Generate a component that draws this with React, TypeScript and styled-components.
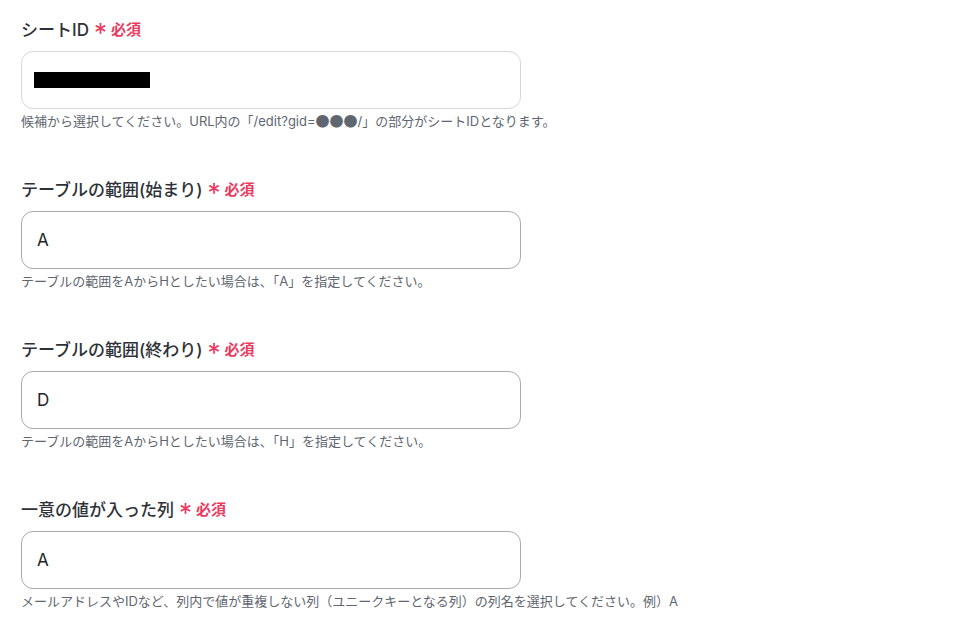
import styled, { createGlobalStyle } from 'styled-components'
import { ReactNode } from 'react'

const GlobalStyle = createGlobalStyle`
  html, body {
    margin: 0;
    padding: 0;
    background: #ffffff;
  }
  body {
    font-family: Inter, "Noto Sans CJK JP", sans-serif;
    color: #333840;
  }
`

interface FieldData {
  label: string
  value?: string
  masked?: boolean
  help: ReactNode
  light?: boolean
}

const Dots = styled.span`
  font-family: "Noto Sans CJK JP", sans-serif;
  font-size: 14px;
  line-height: 1;
`

const fields: FieldData[] = [
  {
    label: 'シートID',
    masked: true,
    light: true,
    help: (
      <>
        候補から選択してください。URL内の「/edit?gid=<Dots>●●●</Dots>/」の部分がシートIDとなります。
      </>
    ),
  },
  {
    label: 'テーブルの範囲(始まり)',
    value: 'A',
    help: 'テーブルの範囲をAからHとしたい場合は、「A」を指定してください。',
  },
  {
    label: 'テーブルの範囲(終わり)',
    value: 'D',
    help: 'テーブルの範囲をAからHとしたい場合は、「H」を指定してください。',
  },
  {
    label: '一意の値が入った列',
    value: 'A',
    help: 'メールアドレスやIDなど、列内で値が重複しない列（ユニークキーとなる列）の列名を選択してください。例）A',
  },
]

const Field = ({ label, value, masked, help, light }: FieldData) => (
  <FieldBlock>
    <Label>
      {label}
      <Required>
        <Asterisk>*</Asterisk>必須
      </Required>
    </Label>
    <InputBox $light={light}>{masked ? <Mask /> : value}</InputBox>
    <Help>{help}</Help>
  </FieldBlock>
)

export default function App() {
  return (
    <>
      <GlobalStyle />
      <Form>
        {fields.map((f) => (
          <Field key={f.label} {...f} />
        ))}
      </Form>
    </>
  )
}

const Form = styled.div`
  display: flex;
  flex-direction: column;
  gap: 46px;
  padding: 16px 0 0 21px;
  width: 900px;
`

const FieldBlock = styled.div`
  display: flex;
  flex-direction: column;
`

const Label = styled.div`
  display: flex;
  align-items: center;
  height: 24px;
  font-size: 17px;
  font-weight: 500;
  color: #2e3238;
`

const Required = styled.span`
  display: inline-flex;
  align-items: center;
  margin-left: 5px;
  font-size: 15px;
  font-weight: 700;
  color: #ea3a5f;
`

const Asterisk = styled.span`
  font-size: 26px;
  font-weight: 400;
  line-height: 1;
  margin-right: 4px;
  transform: translateY(5px);
`

const InputBox = styled.div<{ $light?: boolean }>`
  box-sizing: border-box;
  display: flex;
  align-items: center;
  width: 500px;
  height: 58px;
  margin-top: 11px;
  padding: 0 15px;
  border: 1px solid ${(p) => (p.$light ? '#d3d8df' : '#a3abb5')};
  border-radius: 12px;
  font-size: 17px;
  color: #1f2328;
`

const Mask = styled.div`
  width: 116px;
  height: 16px;
  margin-left: -3px;
  background: #000;
`

const Help = styled.div`
  margin-top: 3px;
  font-size: 13px;
  line-height: 18px;
  color: #5f6670;
`
